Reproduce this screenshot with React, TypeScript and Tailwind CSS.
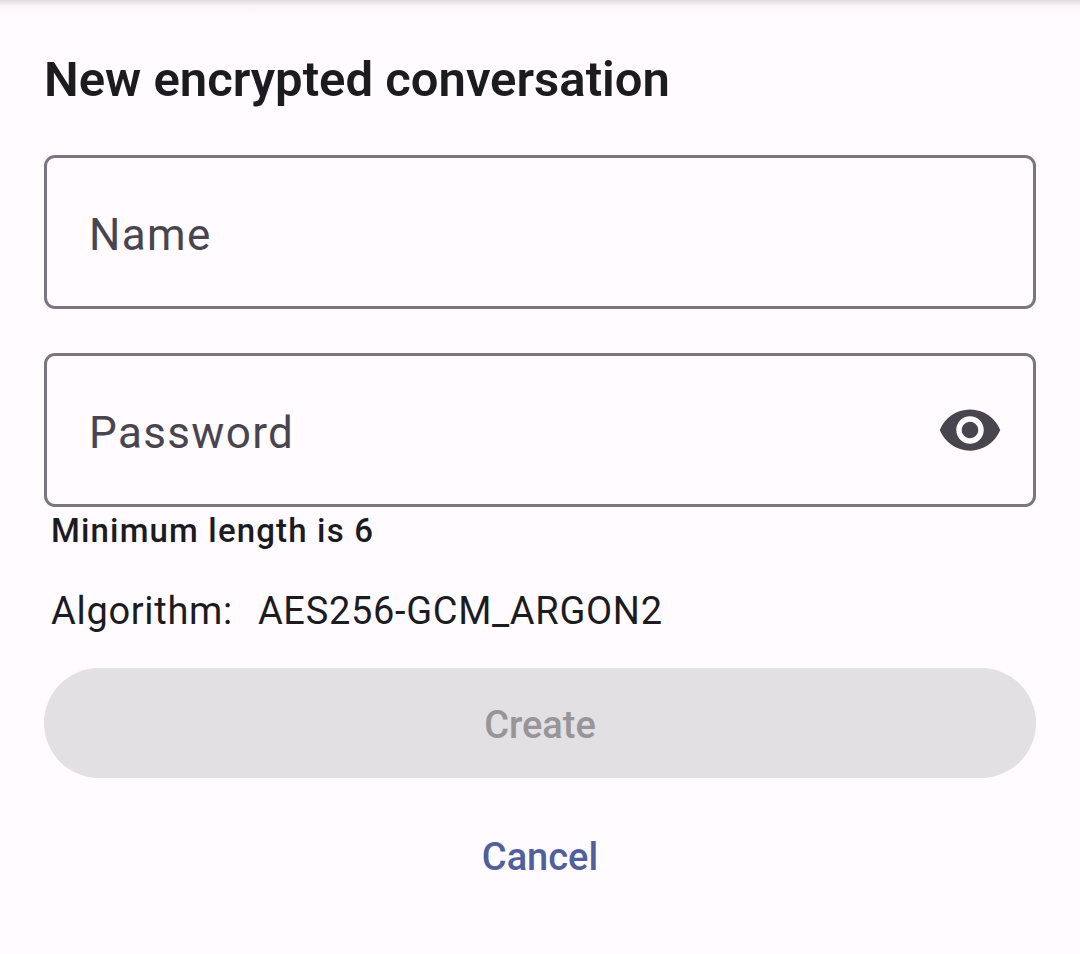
import { useState } from "react";

const fieldClass =
  "block h-[154px] w-full rounded-[11px] border-3 border-[#7a757f] bg-transparent pt-1.5 pl-[42px] font-[Roboto,sans-serif] text-[44px] tracking-[0.031em] text-[#1c1b1f] placeholder:text-[#49454f] placeholder:opacity-100 outline-none";

export default function App() {
  const [name, setName] = useState("");
  const [password, setPassword] = useState("");
  const [visible, setVisible] = useState(false);

  return (
    <main className="min-h-screen bg-[#fffbff] font-[Roboto,sans-serif] text-[#1c1b1f]">
      <div className="h-4 bg-linear-to-b from-[#dedbde] via-[#f7f3f7] via-35% to-[#fffbff]" />
      <form className="flex flex-col px-11 pt-8" onSubmit={(e) => e.preventDefault()}>
        <h1 className="text-[49px] leading-16 font-semibold">New encrypted conversation</h1>
        <input
          aria-label="Name"
          placeholder="Name"
          value={name}
          onChange={(e) => setName(e.target.value)}
          className={`${fieldClass} mt-[43px] pr-11`}
        />
        <div className="relative mt-11">
          <input
            aria-label="Password"
            placeholder="Password"
            type={visible ? "text" : "password"}
            value={password}
            onChange={(e) => setPassword(e.target.value)}
            className={`${fieldClass} pr-32`}
          />
          <button
            type="button"
            aria-label="Show password"
            onClick={() => setVisible(!visible)}
            className="absolute inset-y-0 right-[33px] flex items-center text-[#49454f]"
          >
            <svg viewBox="0 0 24 24" className="size-[66px]" fill="currentColor">
              <path d="M12 4.5C7 4.5 2.73 7.61 1 12c1.73 4.39 6 7.5 11 7.5s9.27-3.11 11-7.5c-1.73-4.39-6-7.5-11-7.5zM12 17c-2.76 0-5-2.24-5-5s2.24-5 5-5 5 2.24 5 5-2.24 5-5 5zm0-8c-1.66 0-3 1.34-3 3s1.34 3 3 3 3-1.34 3-3-1.34-3-3-3z" />
            </svg>
          </button>
        </div>
        <p className="px-[7px] pt-0.5 text-[33px] leading-11 font-medium tracking-[0.035em]">Minimum length is 6</p>
        <p className="mt-8 flex gap-[25px] px-[7px] text-[38px] leading-13 tracking-[0.018em]">
          <span>Algorithm:</span>
          <span>AES256-GCM_ARGON2</span>
        </p>
        <button disabled className="mt-[31px] h-[110px] rounded-full bg-[#e2e0e3] pt-1 text-[38px] font-medium text-[#979598]">
          Create
        </button>
        <button type="button" className="mt-[22px] h-[110px] rounded-full pt-1 text-[38px] font-medium text-[#515f9b]">
          Cancel
        </button>
      </form>
    </main>
  );
}
